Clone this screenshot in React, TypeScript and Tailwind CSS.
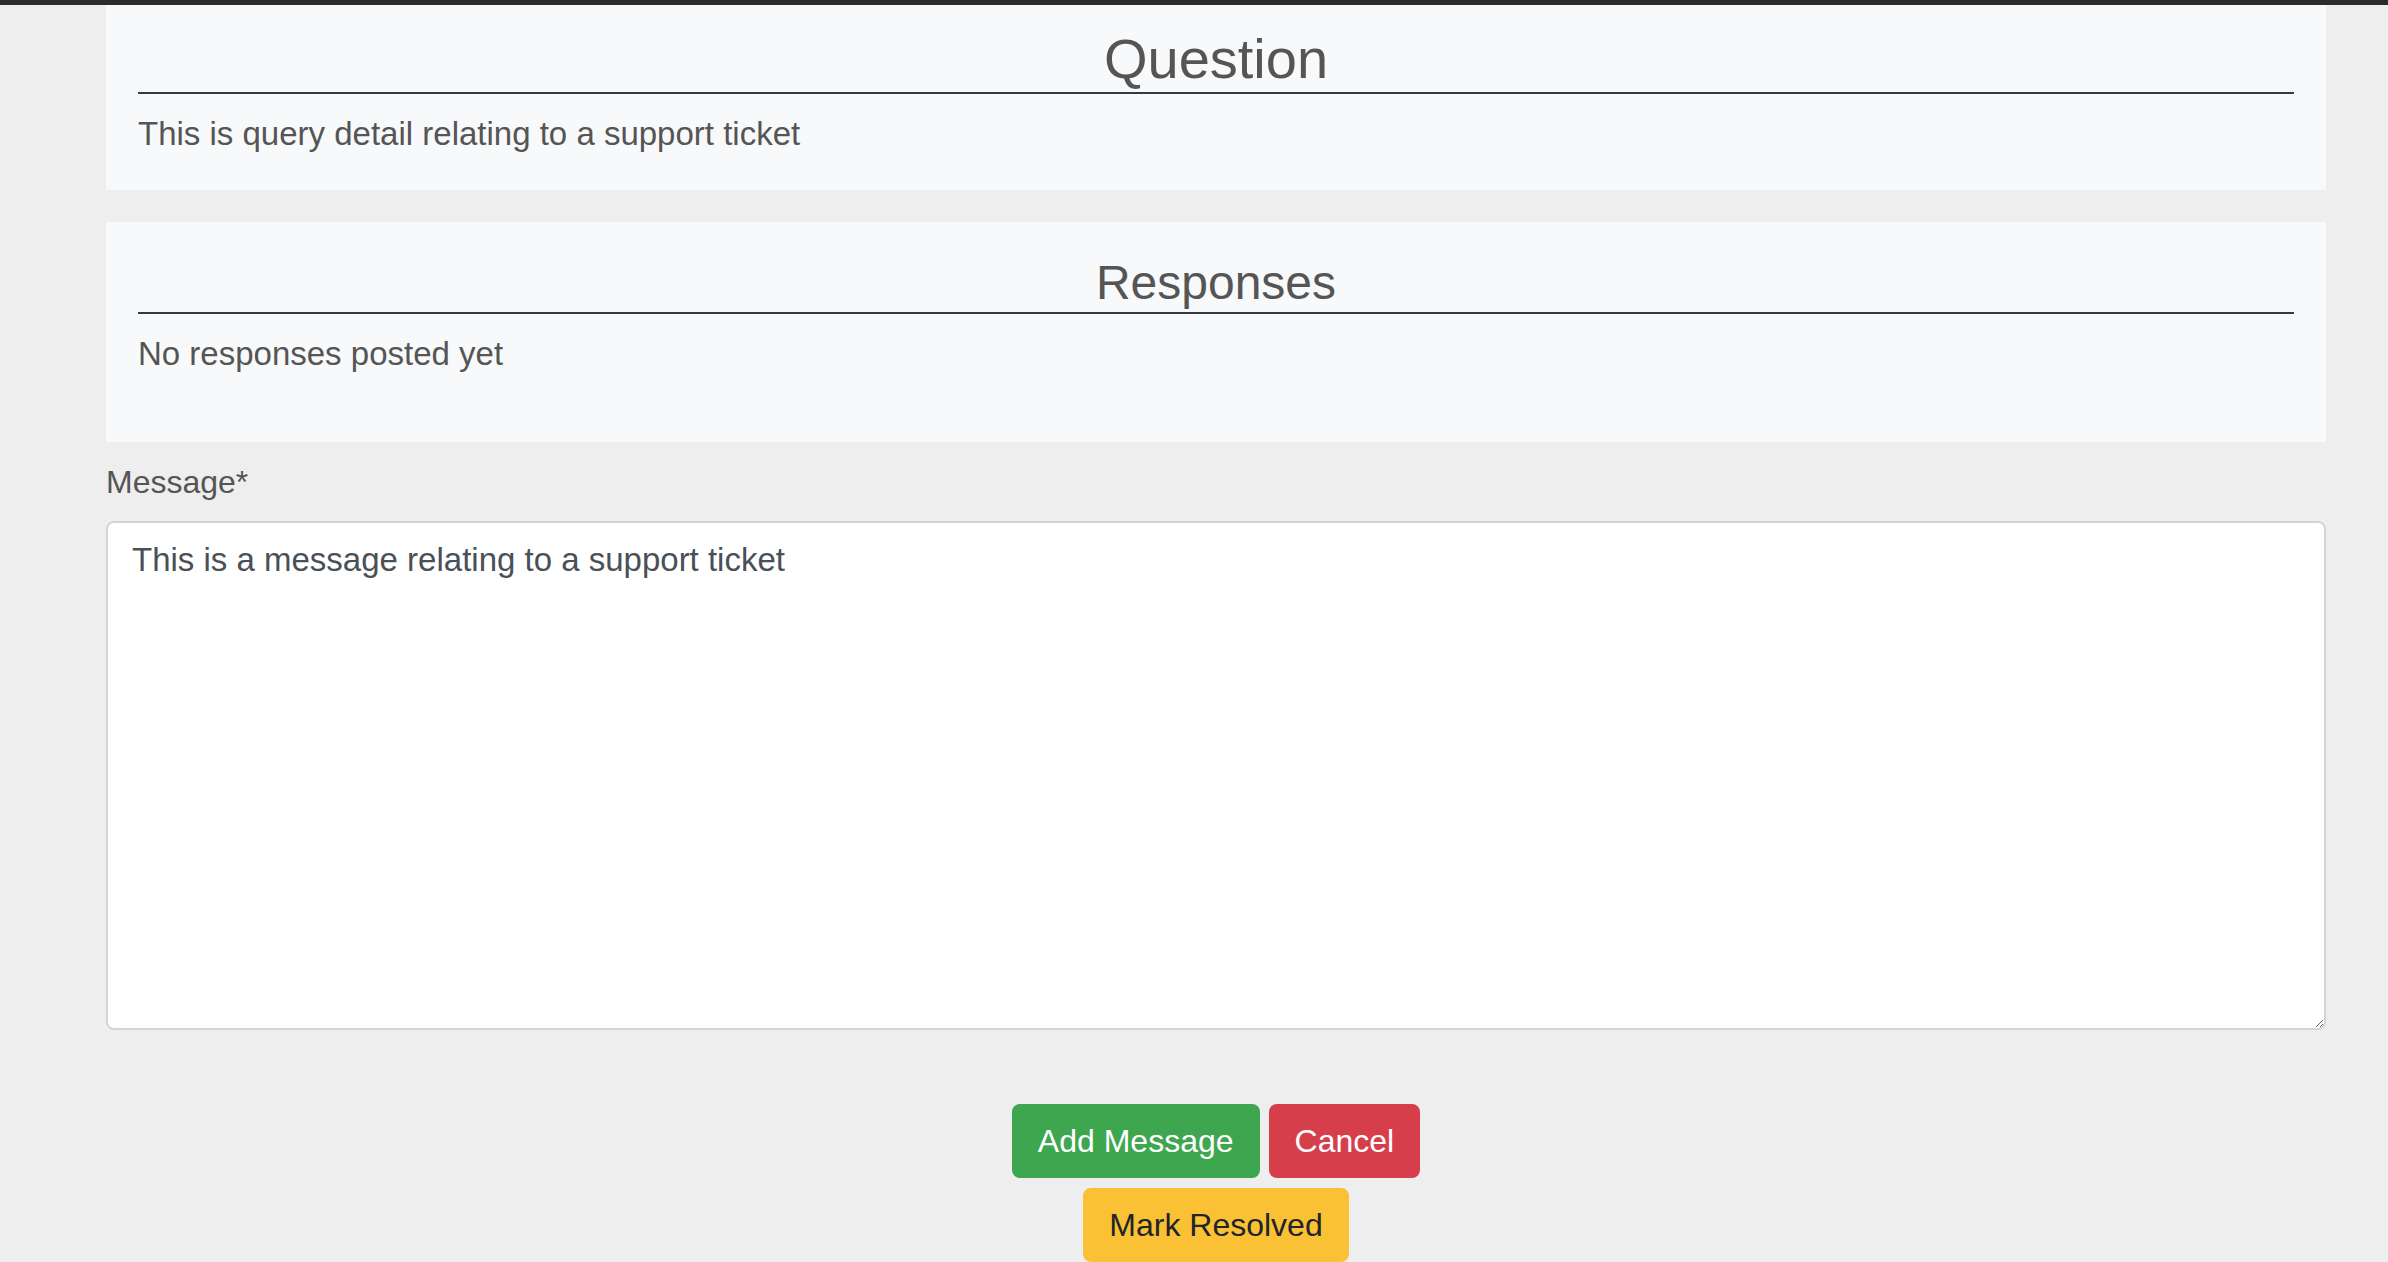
const Section = ({
  title,
  size,
  children,
  className = "",
}: {
  title: string;
  size: "lg" | "md";
  children: React.ReactNode;
  className?: string;
}) => {
  return (
    <section className={`bg-[#f8f9fa] px-8 ${className}`}>
      <h3
        className={`text-center leading-[1.2] text-[#555555] font-normal ${size === "lg" ? "text-[56px]" : "text-[48px]"}`}
      >
        {title}
      </h3>
      <hr className="border-0 h-[2px] bg-[#343a40]" />
      <p className="mt-4 text-[33px] leading-[48px] text-[#555555]">{children}</p>
    </section>
  );
};

export default function App() {
  return (
    <div className="min-h-[1262px] bg-[#eeeeee] font-['Liberation_Sans',Arial,sans-serif] overflow-hidden">
      {/* top nav edge */}
      <div className="h-[5px] bg-[#2b2b2b]" />

      <main className="ml-[106px] w-[2220px]">
        <Section title="Question" size="lg" className="pt-5 pb-8">
          This is query detail relating to a support ticket
        </Section>

        <Section title="Responses" size="md" className="mt-8 pt-8 pb-16">
          No responses posted yet
        </Section>

        <form onSubmit={(e) => e.preventDefault()}>
          <label htmlFor="message" className="block mt-4 text-[32px] leading-[48px] text-[#555555]">
            Message*
          </label>
          <textarea
            id="message"
            defaultValue="This is a message relating to a support ticket"
            className="block mt-[15px] w-full h-[509px] bg-white border-2 border-[#d4d4d4] rounded-lg px-6 py-[13px] text-[33px] leading-[48px] text-[#495057] outline-none"
          />

          <div className="mt-[74px] flex flex-col items-center gap-[10px]">
            <div className="flex gap-[9px]">
              <button type="submit" className="bg-[#3ea64f] text-white text-[32px] leading-[48px] px-6 py-[11px] border-2 border-transparent rounded-lg">
                Add Message
              </button>
              <button type="button" className="bg-[#d63e4b] text-white text-[32px] leading-[48px] px-6 py-[11px] border-2 border-transparent rounded-lg">
                Cancel
              </button>
            </div>
            <button type="button" className="bg-[#fbc134] text-[#212529] text-[32px] leading-[48px] px-6 py-[11px] border-2 border-transparent rounded-lg">
              Mark Resolved
            </button>
          </div>
        </form>
      </main>
    </div>
  );
}
